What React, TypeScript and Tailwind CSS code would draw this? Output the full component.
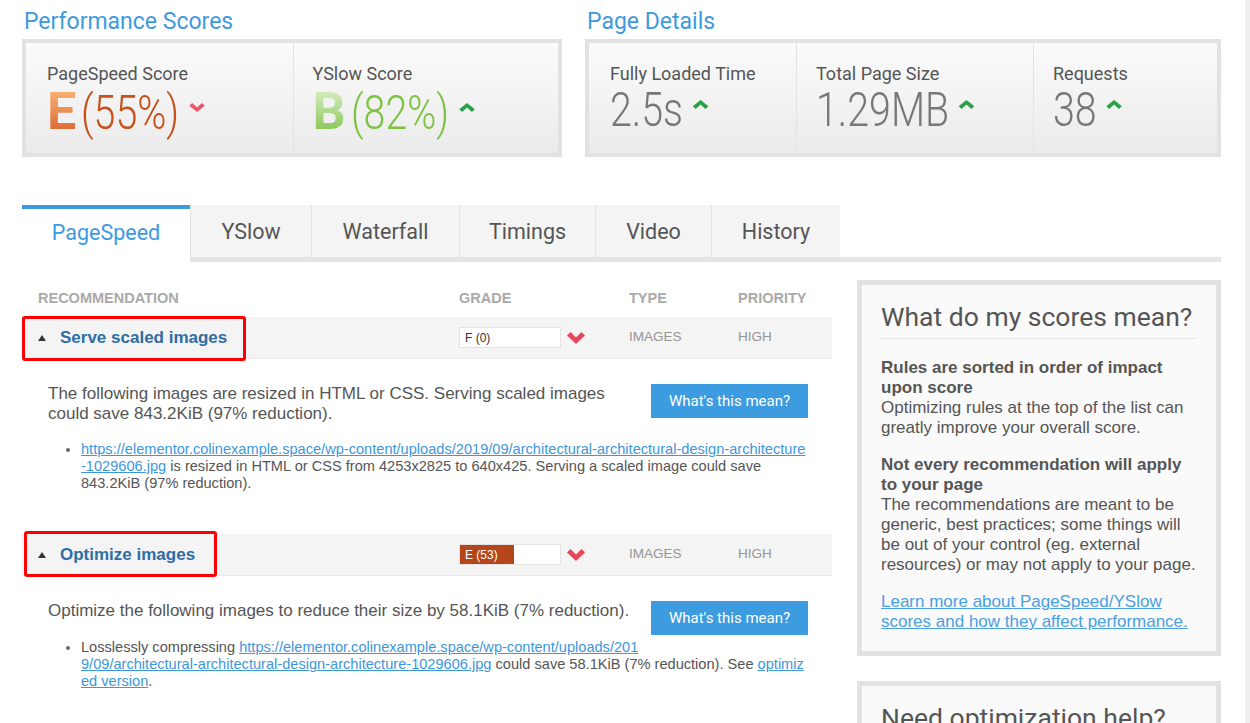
import React from "react";

type ChevronProps = { dir: "up" | "down"; color: string; w: number; h: number; className?: string };

function Chevron({ dir, color, w, h, className }: ChevronProps) {
  const pts = dir === "down" ? "0,3 3,0 8,5 13,0 16,3 8,10" : "0,7 3,10 8,5 13,10 16,7 8,0";
  return (
    <svg width={w} height={h} viewBox="0 0 16 10" preserveAspectRatio="none" className={className}>
      <polygon points={pts} fill={color} />
    </svg>
  );
}

function BigChevron({ className }: { className?: string }) {
  return (
    <svg width={18} height={12} viewBox="0 0 18 12" className={className}>
      <polygon points="0,3.5 3.5,0 9,5.5 14.5,0 18,3.5 9,12" fill="#e8495a" />
    </svg>
  );
}

function Triangle() {
  return (
    <svg width={8} height={6} viewBox="0 0 8 6">
      <polygon points="0,6 4,0 8,6" fill="#333" />
    </svg>
  );
}

type ValueProps = {
  letter?: string;
  letterClass?: string;
  text: string;
  textClass: string;
  dir: "up" | "down";
};

function ScoreValue({ letter, letterClass, text, textClass, dir }: ValueProps) {
  return (
    <div className="mt-[2px] flex items-baseline">
      {letter ? (
        <span className={`text-[52px] font-bold leading-none font-['Roboto',sans-serif] ${letterClass}`}>{letter}</span>
      ) : null}
      <span className={`flex items-center origin-left scale-x-[0.82] ${letter ? "ml-[5px]" : ""}`}>
        <span className={`text-[48px] font-light leading-none font-['Roboto',sans-serif] ${textClass}`}>{text}</span>
        <Chevron
          dir={dir}
          color={dir === "down" ? "#ee5366" : "#26a345"}
          w={19}
          h={9}
          className="ml-[12px] mb-[12px]"
        />
      </span>
    </div>
  );
}

function Label({ children }: { children: React.ReactNode }) {
  return <div className="text-[18px] leading-[20px] text-[#555] font-['Roboto',sans-serif]">{children}</div>;
}

const tabs = [
  { label: "YSlow", cls: "w-[121px]" },
  { label: "Waterfall", cls: "w-[148px]" },
  { label: "Timings", cls: "w-[136px]" },
  { label: "Video", cls: "w-[116px]" },
  { label: "History", cls: "w-[129px]" },
];

function RecRow({
  title,
  grade,
  filled,
  boxClass,
}: {
  title: string;
  grade: string;
  filled: boolean;
  boxClass: string;
}) {
  return (
    <div className="relative grid grid-cols-[437px_170px_109px_94px] items-center h-[42px] bg-[#f4f4f4] border-b border-[#e8e8e8]">
      <div className="flex items-center pl-[16px]">
        <Triangle />
        <span className="ml-[14px] text-[17px] font-bold text-[#2e6da4]">{title}</span>
      </div>
      <div className="flex items-center">
        <div className="flex h-[21px] w-[102px] bg-white border border-[#e3e3e3]">
          {filled ? (
            <div className="flex h-full w-[54px] items-center bg-[#b5461b] pl-[5px] text-[12px] text-white">{grade}</div>
          ) : (
            <div className="flex h-full items-center pl-[5px] text-[12px] text-[#333]">{grade}</div>
          )}
        </div>
        <BigChevron className="ml-[6px]" />
      </div>
      <div className="text-[13.5px] text-[#959595]">IMAGES</div>
      <div className="text-[13.5px] text-[#959595]">HIGH</div>
      <div className={`pointer-events-none absolute border-[3px] border-[#ff0000] rounded-[3px] ${boxClass}`} />
    </div>
  );
}

function HelpButton() {
  return (
    <div className="float-right ml-[10px] mb-[10px] flex h-[34px] w-[157px] items-center justify-center bg-[#3d9be0] text-[15px] text-white font-['Roboto',sans-serif]">
      What's this mean?
    </div>
  );
}

export default function App() {
  return (
    <div className="flex h-[723px] w-[1250px] overflow-hidden bg-white font-['Liberation_Sans',Arial,sans-serif]">
      <div className="w-[1245px] pl-[22px]">
        <div className="w-[1199px]">
          {/* Top sections */}
          <div className="flex gap-[23px]">
            <div className="w-[540px]">
              <h2 className="pt-[7px] mb-[2px] pl-[2px] text-[23px] leading-[30px] text-[#3d9ae0] font-['Roboto',sans-serif]">
                Performance Scores
              </h2>
              <div className="flex h-[118px] border-[4px] border-[#e2e2e2] bg-linear-to-b from-[#fbfbfb] to-[#ebebeb]">
                <div className="flex-1 pl-[21px] pt-[21px]">
                  <Label>PageSpeed Score</Label>
                  <ScoreValue
                    letter="E"
                    letterClass="bg-linear-to-b from-[#f9bb78] to-[#d65a28] bg-clip-text text-transparent"
                    text="(55%)"
                    textClass="text-[#c6511c]"
                    dir="down"
                  />
                </div>
                <div className="flex-1 border-l border-[#e3e3e3] pl-[19px] pt-[21px]">
                  <Label>YSlow Score</Label>
                  <ScoreValue
                    letter="B"
                    letterClass="bg-linear-to-b from-[#ddf1c6] to-[#7dc044] bg-clip-text text-transparent"
                    text="(82%)"
                    textClass="text-[#7ec242]"
                    dir="up"
                  />
                </div>
              </div>
            </div>
            <div className="w-[636px]">
              <h2 className="pt-[7px] mb-[2px] pl-[2px] text-[23px] leading-[30px] text-[#3d9ae0] font-['Roboto',sans-serif]">
                Page Details
              </h2>
              <div className="flex h-[118px] border-[4px] border-[#e2e2e2] bg-linear-to-b from-[#fbfbfb] to-[#ebebeb]">
                <div className="w-[207px] pl-[21px] pt-[21px]">
                  <Label>Fully Loaded Time</Label>
                  <ScoreValue text="2.5s" textClass="text-[#777]" dir="up" />
                </div>
                <div className="w-[237px] border-l border-[#e3e3e3] pl-[19px] pt-[21px]">
                  <Label>Total Page Size</Label>
                  <ScoreValue text="1.29MB" textClass="text-[#777]" dir="up" />
                </div>
                <div className="flex-1 border-l border-[#e3e3e3] pl-[19px] pt-[21px]">
                  <Label>Requests</Label>
                  <ScoreValue text="38" textClass="text-[#777]" dir="up" />
                </div>
              </div>
            </div>
          </div>

          {/* Tabs */}
          <div className="mt-[48px] flex items-start border-b-[5px] border-[#e5e5e5] font-['Roboto',sans-serif]">
            <div className="-mb-[5px] flex h-[57px] w-[168px] items-center justify-center border-t-[4px] border-[#3d9ae0] bg-white pb-[5px] text-[21.5px] text-[#3d9ae0]">
              PageSpeed
            </div>
            {tabs.map((t) => (
              <div
                key={t.label}
                className={`flex h-[52px] items-center justify-center border-l border-[#e4e4e4] bg-[#f4f4f4] pt-[3px] text-[21.5px] text-[#555] ${t.cls}`}
              >
                {t.label}
              </div>
            ))}
          </div>

          {/* Main */}
          <div className="flex gap-[25px]">
            <div className="w-[810px]">
              <div className="mt-[28px] mb-[11px] grid grid-cols-[437px_170px_109px_94px] text-[14.5px] font-bold leading-[16px] text-[#aaa]">
                <div className="pl-[16px]">RECOMMENDATION</div>
                <div>GRADE</div>
                <div>TYPE</div>
                <div>PRIORITY</div>
              </div>

              <RecRow title="Serve scaled images" grade="F (0)" filled={false} boxClass="left-0 -top-[1px] w-[224px] h-[45px]" />
              <div className="pl-[26px] pr-[24px] pt-[25px] pb-[42px] text-[#555]">
                <HelpButton />
                <p className="text-[17px] leading-[20px]">
                  The following images are resized in HTML or CSS. Serving scaled images could save 843.2KiB (97% reduction).
                </p>
                <ul className="mt-[17px] list-disc pl-[33px] text-[14.6px] leading-[17px] marker:text-[#666]">
                  <li>
                    <a className="break-all text-[#3d97dd] underline">
                      https://elementor.colinexample.space/wp-content/uploads/2019/09/architectural-architectural-design-architecture-1029606.jpg
                    </a>{" "}
                    is resized in HTML or CSS from 4253x2825 to 640x425. Serving a scaled image could save 843.2KiB (97% reduction).
                  </li>
                </ul>
              </div>

              <RecRow title="Optimize images" grade="E (53)" filled={true} boxClass="left-[2px] -top-[3px] w-[193px] h-[46px]" />
              <div className="pl-[26px] pr-[24px] pt-[25px] pb-[40px] text-[#555]">
                <HelpButton />
                <p className="text-[17px] leading-[20px]">
                  Optimize the following images to reduce their size by 58.1KiB (7% reduction).
                </p>
                <ul className="mt-[18px] list-disc pl-[33px] text-[14.6px] leading-[17px] marker:text-[#666]">
                  <li>
                    Losslessly compressing{" "}
                    <a className="break-all text-[#3d97dd] underline">
                      https://elementor.colinexample.space/wp-content/uploads/2019/09/architectural-architectural-design-architecture-1029606.jpg
                    </a>{" "}
                    could save 58.1KiB (7% reduction). See{" "}
                    <a className="break-all text-[#3d97dd] underline">optimized version</a>.
                  </li>
                </ul>
              </div>
            </div>

            {/* Sidebar */}
            <div className="mt-[18px] w-[364px]">
              <div className="border-[5px] border-[#e2e2e2] bg-[#fafafa] px-[19px] pt-[16px] pb-[19px]">
                <h3 className="border-b border-[#e6e6e6] pb-[5px] text-[26.5px] leading-[32px] text-[#555] font-['Roboto',sans-serif]">
                  What do my scores mean?
                </h3>
                <div className="mt-[19px] -mr-[4px] text-[17px] leading-[20px] text-[#555]">
                  <p>
                    <b>Rules are sorted in order of impact upon score</b>
                    <br />
                    Optimizing rules at the top of the list can greatly improve your overall score.
                  </p>
                  <p className="mt-[17px]">
                    <b>Not every recommendation will apply to your page</b>
                    <br />
                    The recommendations are meant to be generic, best practices; some things will be out of your control (eg. external resources) or may not apply to your page.
                  </p>
                  <p className="mt-[17px]">
                    <a className="text-[#4aa0e3] underline">
                      Learn more about PageSpeed/YSlow scores and how they affect performance.
                    </a>
                  </p>
                </div>
              </div>
              <div className="mt-[25px] border-[5px] border-[#e2e2e2] bg-[#fafafa] px-[19px] pt-[16px] pb-[19px]">
                <h3 className="border-b border-[#e6e6e6] pb-[5px] text-[26.5px] leading-[32px] text-[#555] font-['Roboto',sans-serif]">
                  Need optimization help?
                </h3>
                <div className="h-[200px]" />
              </div>
            </div>
          </div>
        </div>
      </div>
      <div className="h-full w-[5px] bg-[#efefef]" />
    </div>
  );
}
